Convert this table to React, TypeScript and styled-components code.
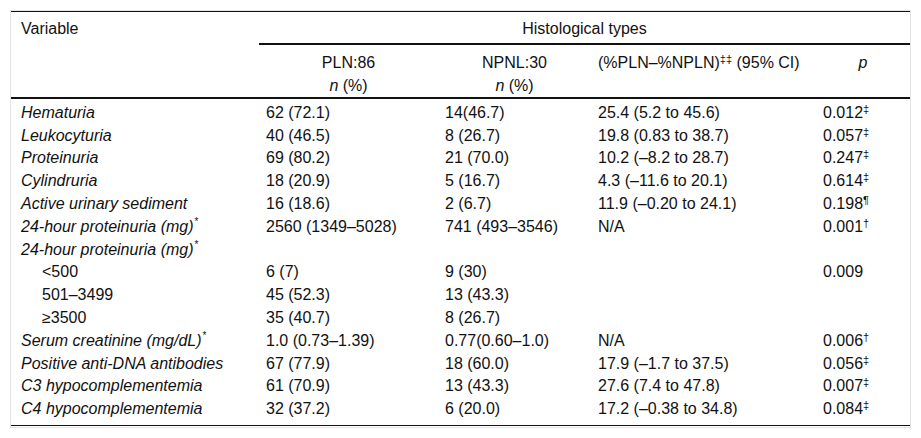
import React from "react";
import styled, { createGlobalStyle } from "styled-components";

const GlobalStyle = createGlobalStyle`
  html, body {
    margin: 0;
    padding: 0;
    background: #ffffff;
  }
  body {
    font-family: "Liberation Sans", Arial, sans-serif;
    color: #111111;
  }
`;

const Frame = styled.div`
  margin: 10px 10px 0;
  border: 1px solid #e4e4e4;
  padding-bottom: 1px;
  background: #ffffff;
`;

const Table = styled.table`
  width: 100%;
  table-layout: fixed;
  border-collapse: separate;
  border-spacing: 0;
  border-top: 1px solid #111111;
  border-bottom: 1px solid #111111;
  font-size: 16px;
  line-height: 22.8px;
`;

const HeadCell = styled.th<{ $align?: "left" | "center"; $rule?: boolean; $pt?: number; $pb?: number; $pl?: number }>`
  font-weight: normal;
  text-align: ${(p) => p.$align ?? "center"};
  vertical-align: top;
  padding: ${(p) => p.$pt ?? 6}px 7px ${(p) => p.$pb ?? 0}px ${(p) => p.$pl ?? 7}px;
  border-bottom: ${(p) => (p.$rule ? "2px solid #111111" : "none")};
  white-space: nowrap;
`;

const Row = styled.tr<{ $first?: boolean; $last?: boolean }>`
  & > td {
    padding-top: ${(p) => (p.$first ? "2.5px" : "0")};
    padding-bottom: ${(p) => (p.$last ? "4px" : "0")};
  }
`;

const Cell = styled.td<{ $italic?: boolean; $indent?: boolean; $first?: boolean }>`
  padding-left: ${(p) => (p.$indent ? "31px" : p.$first ? "10px" : "7px")};
  padding-right: 7px;
  font-style: ${(p) => (p.$italic ? "italic" : "normal")};
  white-space: nowrap;
  vertical-align: top;
`;

const Sup = styled.sup<{ $small?: boolean }>`
  font-size: ${(p) => (p.$small ? "10px" : "11px")};
  line-height: 0;
  vertical-align: ${(p) => (p.$small ? "0.65em" : "0.45em")};
  font-style: normal;
  margin-left: ${(p) => (p.$small ? "1px" : "0")};
`;

const Ital = styled.span`
  font-style: italic;
`;

type Data = {
  label: string;
  star?: boolean;
  italic?: boolean;
  indent?: boolean;
  pln?: string;
  npnl?: string;
  diff?: string;
  p?: string;
  mark?: string;
};

const rows: Data[] = [
  { label: "Hematuria", italic: true, pln: "62 (72.1)", npnl: "14(46.7)", diff: "25.4 (5.2 to 45.6)", p: "0.012", mark: "‡" },
  { label: "Leukocyturia", italic: true, pln: "40 (46.5)", npnl: "8 (26.7)", diff: "19.8 (0.83 to 38.7)", p: "0.057", mark: "‡" },
  { label: "Proteinuria", italic: true, pln: "69 (80.2)", npnl: "21 (70.0)", diff: "10.2 (–8.2 to 28.7)", p: "0.247", mark: "‡" },
  { label: "Cylindruria", italic: true, pln: "18 (20.9)", npnl: "5 (16.7)", diff: "4.3 (–11.6 to 20.1)", p: "0.614", mark: "‡" },
  { label: "Active urinary sediment", italic: true, pln: "16 (18.6)", npnl: "2 (6.7)", diff: "11.9 (–0.20 to 24.1)", p: "0.198", mark: "¶" },
  { label: "24-hour proteinuria (mg)", italic: true, star: true, pln: "2560 (1349–5028)", npnl: "741 (493–3546)", diff: "N/A", p: "0.001", mark: "†" },
  { label: "24-hour proteinuria (mg)", italic: true, star: true },
  { label: "<500", indent: true, pln: "6 (7)", npnl: "9 (30)", p: "0.009" },
  { label: "501–3499", indent: true, pln: "45 (52.3)", npnl: "13 (43.3)" },
  { label: "≥3500", indent: true, pln: "35 (40.7)", npnl: "8 (26.7)" },
  { label: "Serum creatinine (mg/dL)", italic: true, star: true, pln: "1.0 (0.73–1.39)", npnl: "0.77(0.60–1.0)", diff: "N/A", p: "0.006", mark: "†" },
  { label: "Positive anti-DNA antibodies", italic: true, pln: "67 (77.9)", npnl: "18 (60.0)", diff: "17.9 (–1.7 to 37.5)", p: "0.056", mark: "‡" },
  { label: "C3 hypocomplementemia", italic: true, pln: "61 (70.9)", npnl: "13 (43.3)", diff: "27.6 (7.4 to 47.8)", p: "0.007", mark: "‡" },
  { label: "C4 hypocomplementemia", italic: true, pln: "32 (37.2)", npnl: "6 (20.0)", diff: "17.2 (–0.38 to 34.8)", p: "0.084", mark: "‡" },
];

export default function App() {
  return (
    <>
      <GlobalStyle />
      <Frame>
        <Table>
          <colgroup>
            <col style={{ width: "248px" }} />
            <col style={{ width: "179px" }} />
            <col style={{ width: "153px" }} />
            <col style={{ width: "225px" }} />
            <col style={{ width: "94px" }} />
          </colgroup>
          <thead>
            <tr>
              <HeadCell rowSpan={2} $align="left" $pl={10} $rule>
                Variable
              </HeadCell>
              <HeadCell colSpan={4} $rule $pb={2}>
                Histological types
              </HeadCell>
            </tr>
            <tr>
              <HeadCell $rule $pt={7}>
                PLN:86
                <br />
                <Ital>n</Ital> (%)
              </HeadCell>
              <HeadCell $rule $pt={7}>
                NPNL:30
                <br />
                <Ital>n</Ital> (%)
              </HeadCell>
              <HeadCell $rule $pt={7} $align="left">
                (%PLN–%NPLN)<Sup>‡‡</Sup> (95% CI)
              </HeadCell>
              <HeadCell $rule $pt={7}>
                <Ital>p</Ital>
              </HeadCell>
            </tr>
          </thead>
          <tbody>
            {rows.map((r, i) => (
              <Row key={i} $first={i === 0} $last={i === rows.length - 1}>
                <Cell $first $italic={r.italic} $indent={r.indent}>
                  {r.label}
                  {r.star && <Sup $small>*</Sup>}
                </Cell>
                <Cell>{r.pln ?? ""}</Cell>
                <Cell>{r.npnl ?? ""}</Cell>
                <Cell>{r.diff ?? ""}</Cell>
                <Cell>
                  {r.p ?? ""}
                  {r.mark && <Sup>{r.mark}</Sup>}
                </Cell>
              </Row>
            ))}
          </tbody>
        </Table>
      </Frame>
    </>
  );
}
